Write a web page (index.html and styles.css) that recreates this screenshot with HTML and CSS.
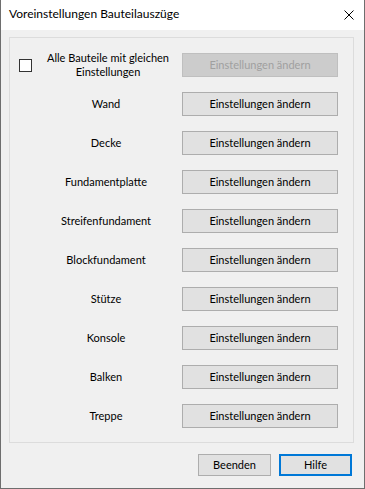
FILE: index.html
```html
<!DOCTYPE html>
<html lang="de">
<head>
<meta charset="utf-8">
<title>Voreinstellungen Bauteilauszüge</title>
<link rel="stylesheet" href="styles.css">
</head>
<body>
<div class="window">
  <div class="titlebar">
    <span class="title">Voreinstellungen Bauteilauszüge</span>
    <svg class="close" width="10" height="10" viewBox="0 0 10 10"><path d="M0.5 0.5 L9.5 9.5 M9.5 0.5 L0.5 9.5" stroke="#000" stroke-width="1" fill="none"/></svg>
  </div>
  <div class="content">
    <div class="group">
      <div class="row">
        <div class="label check-label">
          <span class="checkbox"></span>
          <span class="check-text">Alle Bauteile mit gleichen<br>Einstellungen</span>
        </div>
        <button class="btn disabled">Einstellungen ändern</button>
      </div>
      <div class="row"><div class="label">Wand</div><button class="btn">Einstellungen ändern</button></div>
      <div class="row"><div class="label">Decke</div><button class="btn">Einstellungen ändern</button></div>
      <div class="row"><div class="label">Fundamentplatte</div><button class="btn">Einstellungen ändern</button></div>
      <div class="row"><div class="label">Streifenfundament</div><button class="btn">Einstellungen ändern</button></div>
      <div class="row"><div class="label">Blockfundament</div><button class="btn">Einstellungen ändern</button></div>
      <div class="row"><div class="label">Stütze</div><button class="btn">Einstellungen ändern</button></div>
      <div class="row"><div class="label">Konsole</div><button class="btn">Einstellungen ändern</button></div>
      <div class="row"><div class="label">Balken</div><button class="btn">Einstellungen ändern</button></div>
      <div class="row"><div class="label">Treppe</div><button class="btn">Einstellungen ändern</button></div>
    </div>
    <div class="footer">
      <button class="btn small">Beenden</button>
      <button class="btn small default">Hilfe</button>
    </div>
  </div>
</div>
</body>
</html>
```
FILE: styles.css
```css
* { box-sizing: border-box; }
html, body { margin: 0; padding: 0; }
body {
  font-family: Lato, "Noto Sans", sans-serif;
  font-size: 11px;
  color: #000;
  background: #f0f0f0;
}
.window {
  width: 365px;
  height: 489px;
  border: 1px solid #6e6e6e;
  border-top: none;
  background: #f0f0f0;
  display: flex;
  flex-direction: column;
}
.titlebar {
  height: 30px;
  background: #fff;
  display: flex;
  align-items: center;
  justify-content: space-between;
  padding: 0 10px 0 8px;
}
.title {
  font-size: 12px;
  line-height: 16px;
  margin-top: -2px;
}
.close { display: block; margin-top: -1px; }
.content {
  padding: 7px 10px 0 8px;
  display: flex;
  flex-direction: column;
}
.group {
  border: 1px solid #dcdcdc;
  height: 406px;
  padding: 15px 15px 0 0;
  display: flex;
  flex-direction: column;
  gap: 15px;
}
.row {
  display: flex;
  align-items: center;
  height: 24px;
}
.label {
  width: 172px;
  padding-left: 20px;
  text-align: center;
  line-height: 16px;
  margin-top: -1px;
}
.check-label {
  display: flex;
  align-items: center;
  padding-left: 9px;
  margin-top: 0;
}
.checkbox {
  width: 13px;
  height: 13px;
  border: 1px solid #333;
  background: #fff;
  flex: none;
}
.check-text {
  flex: 1;
  text-align: center;
  line-height: 14px;
  padding-left: 2px;
  white-space: nowrap;
}
.btn {
  font-family: inherit;
  font-size: 11px;
  color: #000;
  width: 156px;
  height: 24px;
  background: #e1e1e1;
  border: 1px solid #adadad;
  padding: 0;
  margin: 0;
  line-height: 16px;
}
.btn.disabled {
  background: #cccccc;
  border-color: #bfbfbf;
  color: #a0a0a0;
}
.footer {
  display: flex;
  justify-content: flex-end;
  gap: 8px;
  margin-top: 11px;
  padding-right: 2px;
}
.btn.small {
  width: 73px;
  height: 22px;
}
.btn.default {
  border: 2px solid #0078d7;
}
```
